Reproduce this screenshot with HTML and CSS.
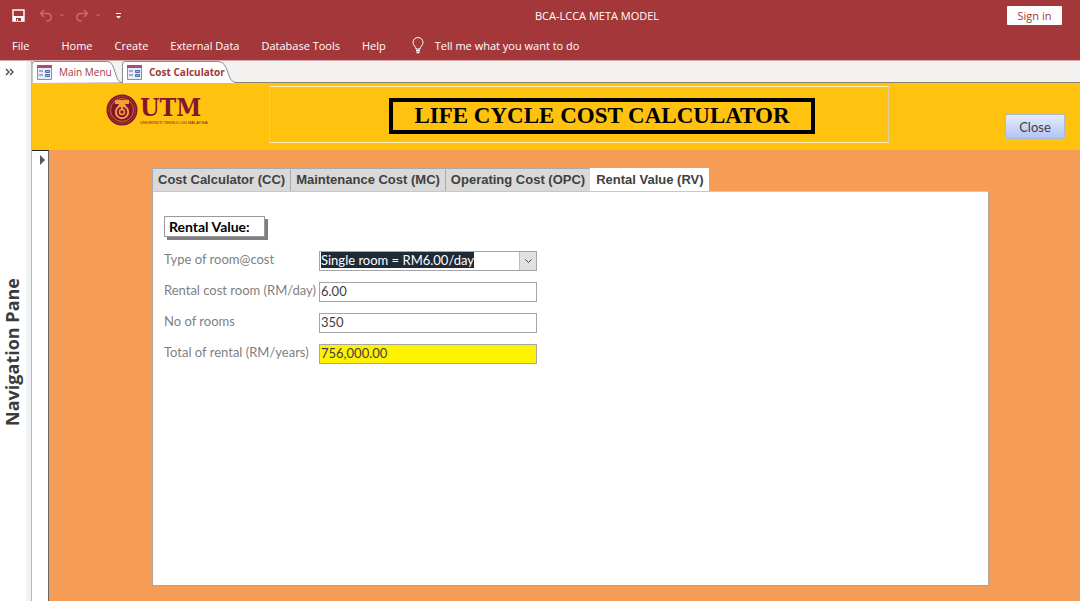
FILE: index.html
```
<!DOCTYPE html>
<html lang="en">
<head>
<meta charset="utf-8">
<title>BCA-LCCA META MODEL</title>
<link rel="stylesheet" href="styles.css">
</head>
<body>
<header class="ribbon">
  <div class="titlebar">
    <div class="quick">
      <button class="icon-btn" aria-label="Save"><svg width="13" height="13" viewBox="0 0 13 13"><path d="M1 1h11v11H1z" fill="none" stroke="#fff" stroke-width="1.4"/><path d="M1 7h11v5H1z" fill="#fff"/><path d="M4 9h5v3H4z" fill="#a4373a"/><path d="M5 10h1v2H5z" fill="#fff"/></svg></button>
      <button class="icon-btn undo" aria-label="Undo" disabled><svg width="25" height="13" viewBox="0 0 25 13" fill="none" stroke="#c5696b"><path d="M5 1L1.500 4.500L5 8M1.500 4.500H9a3.800 3.800 0 0 1 0 7.500H7" stroke-width="1.500"/><path d="M21 5l2 2 2-2"/></svg></button>
      <button class="icon-btn redo" aria-label="Redo" disabled><svg width="25" height="13" viewBox="0 0 25 13" fill="none" stroke="#c5696b"><path d="M9 1l3.500 3.500L9 8M12.500 4.500H5A3.800 3.800 0 0 0 5 12h2" stroke-width="1.500"/><path d="M21 5l2 2 2-2"/></svg></button>
      <button class="icon-btn" aria-label="Customize toolbar"><svg width="5" height="6" viewBox="0 0 5 6" fill="#fff"><path d="M0 0h5v1H0zM0 3h5L2.500 5.500z"/></svg></button>
    </div>
    <h1 class="app-title">BCA-LCCA META MODEL</h1>
    <div class="account"><button class="sign-in">Sign in</button></div>
  </div>
  <nav class="menu">
    <button class="file">File</button>
    <button>Home</button>
    <button>Create</button>
    <button>External Data</button>
    <button>Database Tools</button>
    <button>Help</button>
    <button class="tell"><svg width="12" height="17" viewBox="0 0 12 17" fill="none" stroke="#fff"><path d="M4 12C4 9.500 1 8.500 1 5.500a5 5 0 0 1 10 0C11 8.500 8 9.500 8 12z"/><path d="M4 13.500h4M4.500 15.500h3" stroke-width="1.300"/></svg>Tell me what you want to do</button>
  </nav>
</header>
<div class="workspace">
  <aside class="nav-pane">
    <button class="expand" aria-label="Open navigation pane"><svg width="9" height="8" viewBox="0 0 9 8" fill="none" stroke="#444" stroke-width="1.300"><path d="M1 1l3 3-3 3M5 1l3 3-3 3"/></svg></button>
    <span class="nav-title">Navigation Pane</span>
  </aside>
  <main class="document">
    <div class="doc-tabs">
      <button class="doc-tab"><svg class="tab-shape" viewBox="0 0 92 22" preserveAspectRatio="none"><path d="M0 22V3Q0 .5 3 .5H77C86 .5 84 21.500 92 21.500"/></svg><svg class="form-icon" width="15" height="15" viewBox="0 0 15 15"><path d="M.5.5h14v14H.5z" fill="#e6edf8" stroke="#7a93bd"/><path d="M0 0h15v3H0z" fill="#b0487c"/><path d="M2 6h4M2 10h4" stroke="#4c6fa8"/><path d="M8.500 5.500h4v2h-4zM8.500 9.500h4v2h-4z" fill="#9bb5dd" stroke="#4c6fa8"/></svg>Main Menu</button>
      <button class="doc-tab active"><svg class="tab-shape" viewBox="0 0 114 22" preserveAspectRatio="none"><path d="M.5 22V3Q.5 .5 3 .5H96C108 .5 104 21.500 114 21.500V22"/></svg><svg class="form-icon" width="15" height="15" viewBox="0 0 15 15"><path d="M.5.5h14v14H.5z" fill="#e6edf8" stroke="#7a93bd"/><path d="M0 0h15v3H0z" fill="#b0487c"/><path d="M2 6h4M2 10h4" stroke="#4c6fa8"/><path d="M8.500 5.500h4v2h-4zM8.500 9.500h4v2h-4z" fill="#9bb5dd" stroke="#4c6fa8"/></svg>Cost Calculator</button>
    </div>
    <div class="form-header">
      <div class="logo">
        <svg width="32" height="32" viewBox="0 0 32 32"><circle cx="16" cy="16" r="15.500" fill="#85142f"/><circle cx="16" cy="16" r="13.500" fill="none" stroke="#c46f2a" stroke-dasharray="1 1"/><circle cx="16" cy="16" r="11.500" fill="none" stroke="#dc8a28" stroke-width=".8"/><path d="M9 6h14v4h-4l1 2h-8l1-2H9z" fill="#f0a03a"/><circle cx="16" cy="18" r="6.200" fill="none" stroke="#f0a03a" stroke-width="2"/><circle cx="16" cy="18" r="2.500" fill="#85142f" stroke="#f0a03a" stroke-width="1.500"/><path d="M15 11h2v5h-2z" fill="#f0a03a"/></svg>
        <div class="logo-words"><span class="logo-name">UTM</span><span class="logo-sub">UNIVERSITI TEKNOLOGI MALAYSIA</span></div>
      </div>
      <div class="frame"><h2 class="form-title">LIFE CYCLE COST CALCULATOR</h2></div>
      <button class="close">Close</button>
    </div>
    <div class="form-body">
      <div class="selector"><svg width="7" height="10" viewBox="0 0 7 10"><path d="M1 0l5 5-5 5z" fill="#555"/></svg></div>
      <div class="detail">
        <div class="page-tabs" role="tablist">
          <button role="tab">Cost Calculator (CC)</button>
          <button role="tab">Maintenance Cost (MC)</button>
          <button role="tab">Operating Cost (OPC)</button>
          <button role="tab" class="current" aria-selected="true">Rental Value (RV)</button>
        </div>
        <section class="page">
          <h3 class="section-title">Rental Value:</h3>
          <form class="fields">
            <label for="type">Type of room@cost</label>
            <div class="combo"><select id="type"><option>Single room = RM6.00/day</option></select><button type="button" class="drop" aria-label="Show list"><svg width="7" height="4" viewBox="0 0 7 4" fill="none" stroke="#444"><path d="M.5.5l3 3 3-3"/></svg></button></div>
            <label for="cost">Rental cost room (RM/day)</label>
            <input id="cost" value="6.00">
            <label for="rooms">No of rooms</label>
            <input id="rooms" value="350">
            <label for="total">Total of rental (RM/years)</label>
            <input id="total" class="total" value="756,000.00" readonly>
          </form>
        </section>
      </div>
    </div>
  </main>
</div>
</body>
</html>
```
FILE: styles.css
```
* { box-sizing: border-box; }
body {
  margin: 0;
  min-height: 100vh;
  display: flex;
  flex-direction: column;
  font: 11px/16px "Open Sans", "Noto Sans", sans-serif;
  background: #fff;
}
button, input, select { font: inherit; color: inherit; margin: 0; padding: 0; border: 0; border-radius: 0; background: none; }
h1, h2, h3 { margin: 0; font-size: inherit; font-weight: normal; }
svg { display: block; flex: none; }

.ribbon { background: #a4373a; color: #fff; border-bottom: 1px solid #d8a9aa; }
.titlebar { display: grid; grid-template-columns: 1fr auto 1fr; align-items: center; height: 31px; padding: 0 18px 0 12px; }
.quick { display: flex; align-items: center; }
.undo { margin-left: 14px; }
.redo { margin-left: 11px; }
.redo + .icon-btn { margin-left: 16px; }
.app-title { margin-left: 120px; }
.account { display: flex; justify-content: flex-end; }
.sign-in { width: 55px; height: 19px; border-radius: 1px; background: #fff; color: #a4373a; }
.menu { display: flex; align-items: center; gap: 22px; height: 29px; padding-left: 12px; }
.menu .file { margin-right: 10px; }
.tell { display: flex; align-items: center; gap: 11px; margin-left: 4px; }

.workspace { flex: 1; display: flex; }
.nav-pane { flex: none; width: 32px; display: flex; flex-direction: column; align-items: flex-start; border-right: 1px solid #b4b9c0; background: linear-gradient(to right, #fff 26px, #edf1f4 27px); }
.expand { margin: 7px 0 0 5px; }
.nav-title { margin: auto 0; padding-bottom: 27px; writing-mode: vertical-rl; transform: rotate(180deg); line-height: 24px; font-size: 18px; font-weight: bold; color: #3b3b3b; }

.document { flex: 1; min-width: 0; display: flex; flex-direction: column; }
.doc-tabs { display: flex; height: 22px; background: #f3f2f1; border-bottom: 1px solid #8b8672; }
.doc-tab { position: relative; z-index: 1; display: flex; align-items: center; gap: 7px; height: 22px; width: 90px; padding-left: 5px; white-space: nowrap; color: #a4373a; font-size: 10px; }
.doc-tab.active { width: 114px; font-weight: bold; }
.tab-shape { position: absolute; z-index: -1; left: 0; top: 0; width: 100%; height: 100%; fill: #fff; stroke: #8b8b8b; }

.form-header { display: flex; background: #ffc20e; height: 67px; padding: 3px 15px 0 74px; }
.logo { display: flex; gap: 2px; flex: none; width: 94px; margin: 8px 69px 0 0; color: #85142f; height: 32px; }
.logo-words { display: flex; flex-direction: column; align-items: flex-start; }
.logo-name { font: bold 25px/27px "DejaVu Serif Condensed", "DejaVu Serif", serif; }
.logo-sub { font: 4px/4px "Liberation Sans Narrow", "Liberation Sans", sans-serif; white-space: nowrap; }
.frame { flex: 1; height: 57px; padding: 11px 73px 0 119px; border: 1px solid #d8cf9c; border-top-color: #fff3b8; border-bottom-color: #fff3b8; }
.form-title { border: 4px solid #000; height: 36px; font: bold 23px/28px "Liberation Serif", serif; text-align: center; white-space: nowrap; color: #000; }
.close { flex: none; width: 60px; height: 25px; margin: 28px 0 0 116px; border: 1px solid #a9b9d8; border-radius: 2px; background: linear-gradient(#e6ebfa, #b3c5f5); font: 13px/16px Lato, sans-serif; color: #404040; }

.form-body { flex: 1; display: flex; background: #f59d56; }
.selector { flex: none; width: 17px; padding: 4px 0 0 7px; background: #fff; border-top: 1px solid #222; border-right: 1px solid #666; }
.detail { flex: 1; min-width: 0; display: flex; flex-direction: column; padding: 18px 91px 15px 103px; }
.page-tabs { display: flex; }
.page-tabs button { height: 23px; padding: 0 5px; background: #d9d9d9; border: 1px solid #a6abb3; border-width: 1px 0 0 1px; font: bold 13px/20px "Liberation Sans", sans-serif; color: #404040; white-space: nowrap; }
.page-tabs .current { background: #fff; border-color: #fff; }
.page { flex: 1; padding: 24px 12px; background: #fff; border: 1px solid #b0a59a; border-top-color: #c4c8ce; }
.section-title { width: 101px; height: 21px; margin-left: -1px; padding-left: 4px; border: 1px solid #999; box-shadow: 3px 3px 0 #7f7f7f; font: bold 14px/19px Lato, sans-serif; color: #000; background: #fff; }
.fields { display: grid; grid-template-columns: 155px 218px; row-gap: 11px; margin-top: 14px; margin-left: -1px; font: 13px/16px Lato, sans-serif; color: #7f7f7f; }
.fields label { white-space: nowrap; line-height: 17px; }
.fields input, .combo { height: 20px; border: 1px solid #a6a6a6; color: #404040; background: #fff; }
.fields input { padding: 0 1px 2px; }
.fields .total { background: #fff200; }
.combo { display: flex; justify-content: space-between; padding-left: 1px; }
.combo select { appearance: none; height: 16px; background: #1f2937; color: #fff; }
.drop { display: flex; align-items: center; justify-content: center; width: 17px; background: #e1e1e1; border-left: 1px solid #bbb; }
```
